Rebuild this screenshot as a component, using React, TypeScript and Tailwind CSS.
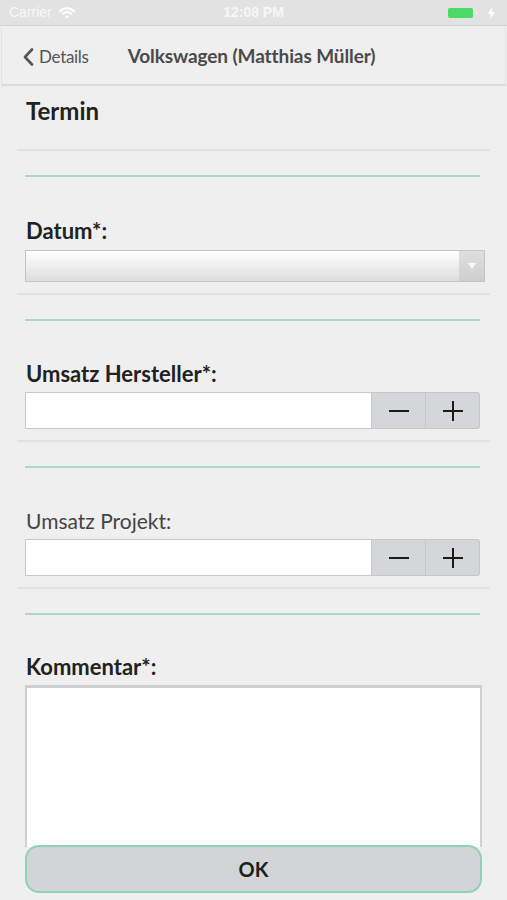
import React from "react";

const font = { fontFamily: "Lato, 'Open Sans', sans-serif" };

function Divider() {
  return (
    <div className="flex flex-col">
      <div className="mx-[17px] h-[2px] bg-[#e2e2e2] rounded-full" />
      <div className="mt-[24px] mx-[25px] mr-[27px] h-[2px] bg-[#a9d9c5]" />
    </div>
  );
}

function Stepper() {
  return (
    <div className="flex h-[37px] mx-[25px] mr-[27px]">
      <div className="flex-1 bg-white border border-[#c9c9c9]" />
      <button className="w-[54px] bg-[#d5d6d7] border border-l-0 border-[#c6c6c6] flex items-center justify-center">
        <span className="block w-[20px] h-[2px] bg-[#1a1a1a]" />
      </button>
      <button className="w-[54px] bg-[#d5d6d7] border border-l-0 border-[#c6c6c6] rounded-r-[3px] flex items-center justify-center relative">
        <span className="block w-[20px] h-[2px] bg-[#1a1a1a]" />
        <span className="absolute w-[2px] h-[20px] bg-[#1a1a1a]" />
      </button>
    </div>
  );
}

export default function App() {
  return (
    <div className="w-[507px] h-[900px] bg-[#efefef] overflow-hidden flex flex-col" style={font}>
      {/* status bar */}
      <div className="h-[26px] bg-[#e2e2e2] flex items-center px-[9px] text-[#f7f7f7] text-[14px] relative border-b border-[#d2d2d2]">
        <span style={{ fontFamily: "'Liberation Sans', sans-serif" }}>Carrier</span>
        <svg className="ml-[7px]" width="16" height="12" viewBox="0 0 16 12">
          <path d="M1 4.2a10 10 0 0 1 14 0" stroke="white" strokeWidth="2" fill="none" strokeLinecap="round" />
          <path d="M3.6 6.9a6.3 6.3 0 0 1 8.8 0" stroke="white" strokeWidth="2" fill="none" strokeLinecap="round" />
          <path d="M6 9.5 8 11.5 10 9.5a2.9 2.9 0 0 0-4 0z" fill="white" />
        </svg>
        <span className="absolute left-1/2 -translate-x-1/2 font-semibold" style={{ fontFamily: "'Liberation Sans', sans-serif" }}>12:08 PM</span>
        <div className="ml-auto flex items-center gap-[3px] mr-[2px]">
          <div className="w-[25px] h-[10px] rounded-[2px] bg-[#4cd964]" />
          <div className="w-[2px] h-[4px] bg-[#e9e9e9]" />
          <svg width="9" height="12" viewBox="0 0 9 12" className="ml-[6px]">
            <path d="M5 0 1 7h3L3 12l5-7H5z" fill="white" />
          </svg>
        </div>
      </div>
      {/* nav bar */}
      <div className="h-[60px] bg-[#efefef] border-b-2 border-[#dcdcdc] border-x border-x-[#e4e4e4] mx-[1px] flex items-center relative">
        <div className="flex items-center ml-[21px] text-[#555] text-[17px] mt-[3px]">
          <svg width="11" height="18" viewBox="0 0 11 18" className="mr-[5px]">
            <path d="M9 1.5 2 9l7 7.5" stroke="#555" strokeWidth="2.6" fill="none" strokeLinecap="round" strokeLinejoin="round" />
          </svg>
          <span className="tracking-[-0.3px]">Details</span>
        </div>
        <div className="ml-[39px] mt-[3px] text-[#4a4a4a] font-bold text-[19px] tracking-[-0.1px]">
          Volkswagen (Matthias Müller)
        </div>
      </div>

      {/* content */}
      <div className="flex flex-col text-[#222]">
        <div className="mt-[10px] ml-[26px] text-[24px] font-bold h-[30px] leading-[30px]">Termin</div>
        <div className="mt-[23px]">
          <Divider />
        </div>

        <div className="mt-[40px] ml-[26px] text-[22px] font-bold leading-[27px]">Datum*:</div>
        <div className="mt-[6px] mx-[25px] mr-[22px] h-[32px] flex border border-[#c4c4c4] bg-gradient-to-b from-[#ffffff] to-[#dedede]">
          <div className="flex-1" />
          <div className="w-[25px] bg-gradient-to-b from-[#dedede] to-[#cfcfcf] flex items-center justify-center">
            <svg width="8" height="6" viewBox="0 0 8 6"><path d="M0 0h8L4 6z" fill="#fafafa" /></svg>
          </div>
        </div>
        <div className="mt-[11px]">
          <Divider />
        </div>

        <div className="mt-[39px] ml-[26px] text-[22px] font-bold leading-[27px]">Umsatz Hersteller*:</div>
        <div className="mt-[5px]">
          <Stepper />
        </div>
        <div className="mt-[11px]">
          <Divider />
        </div>

        <div className="mt-[39px] ml-[26px] text-[21px] text-[#444] leading-[27px]">Umsatz Projekt:</div>
        <div className="mt-[5px]">
          <Stepper />
        </div>
        <div className="mt-[11px]">
          <Divider />
        </div>

        <div className="mt-[38px] ml-[26px] text-[22px] font-bold leading-[27px]">Kommentar*:</div>
        <div className="mt-[5px] mx-[25px] mr-[25px] h-[162px] bg-white border-t-[3px] border-x-2 border-[#cfcfcf]" />
        <button className="-mt-[2px] mx-[25px] mr-[25px] h-[48px] rounded-[14px] border-2 border-[#91d1b7] bg-[#d3d4d5] text-[20px] font-bold text-[#1e1e1e]">
          OK
        </button>
      </div>
    </div>
  );
}
